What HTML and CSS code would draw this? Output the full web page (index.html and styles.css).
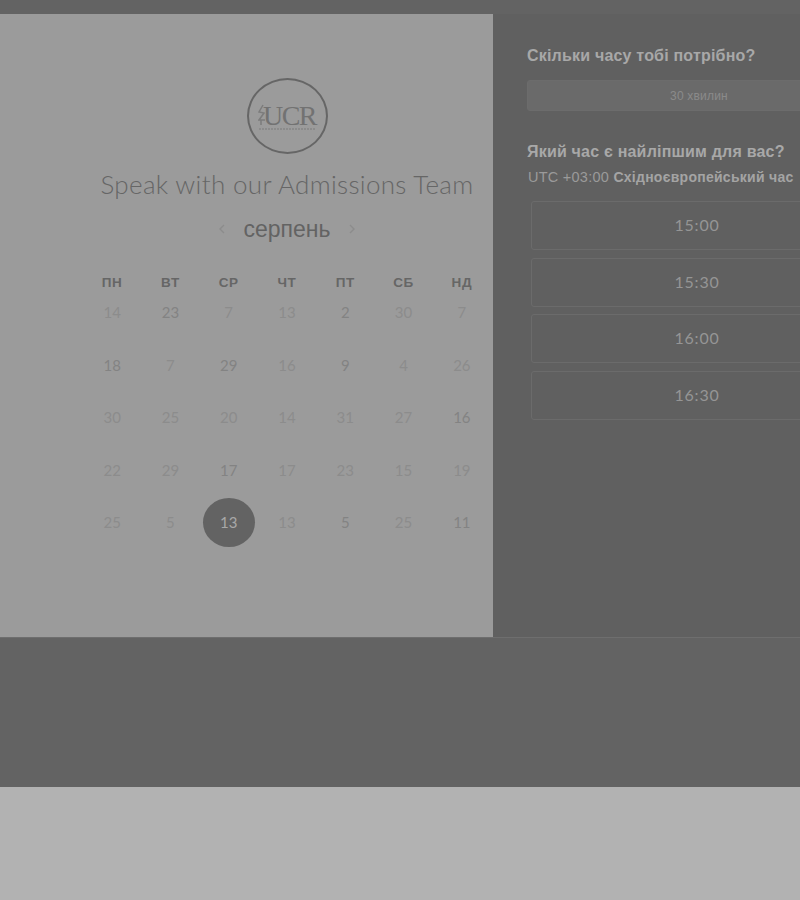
FILE: index.html
```html
<!DOCTYPE html>
<html lang="uk">
<head>
    <meta charset="UTF-8">
    <meta name="viewport" content="width=device-width, initial-scale=1.0">
    <title>Speak with our Admissions Team</title>
    <link rel="stylesheet" href="styles.css">
</head>
<body>

<div class="top-bar"></div>

<main class="booking">
    <section class="calendar-panel">
        <div class="logo">
            <div class="logo-mark">
                <svg width="7" height="22" viewBox="0 0 7 22"><path d="M5 1 1 8l5 1-5 7h6M3 16v5"/></svg>
                <span class="logo-name">UCR</span>
            </div>
            <svg class="logo-rule" width="56" height="2" viewBox="0 0 56 2"><path d="M0 1h56"/></svg>
        </div>
        <h1 class="title">Speak with our Admissions Team</h1>

        <div class="month-nav">
            <svg class="chevron" width="10" height="14" viewBox="0 0 10 14"><path d="M7 3 3 7l4 4"/></svg>
            <span class="month-name">серпень</span>
            <svg class="chevron" width="10" height="14" viewBox="0 0 10 14"><path d="M3 3l4 4-4 4"/></svg>
        </div>

        <div class="weekdays">
            <div class="weekday">ПН</div>
            <div class="weekday">ВТ</div>
            <div class="weekday">СР</div>
            <div class="weekday">ЧТ</div>
            <div class="weekday">ПТ</div>
            <div class="weekday">СБ</div>
            <div class="weekday">НД</div>
        </div>

        <div class="days">
            <div class="day">14</div>
            <div class="day dark">23</div>
            <div class="day">7</div>
            <div class="day">13</div>
            <div class="day dark">2</div>
            <div class="day">30</div>
            <div class="day">7</div>

            <div class="day dark">18</div>
            <div class="day">7</div>
            <div class="day dark">29</div>
            <div class="day">16</div>
            <div class="day dark">9</div>
            <div class="day">4</div>
            <div class="day">26</div>

            <div class="day">30</div>
            <div class="day">25</div>
            <div class="day">20</div>
            <div class="day">14</div>
            <div class="day">31</div>
            <div class="day">27</div>
            <div class="day dark">16</div>

            <div class="day">22</div>
            <div class="day">29</div>
            <div class="day dark">17</div>
            <div class="day">17</div>
            <div class="day">23</div>
            <div class="day">15</div>
            <div class="day">19</div>

            <div class="day">25</div>
            <div class="day">5</div>
            <div class="day"><span class="selected">13</span></div>
            <div class="day">13</div>
            <div class="day dark">5</div>
            <div class="day">25</div>
            <div class="day dark">11</div>
        </div>
    </section>

    <section class="times-panel">
        <h2 class="question">Скільки часу тобі потрібно?</h2>
        <button type="button" class="duration">30 хвилин</button>

        <h2 class="question question-time">Який час є найліпшим для вас?</h2>
        <p class="timezone">UTC +03:00 <b>Східноєвропейський час</b></p>

        <div class="slots">
            <button type="button" class="slot">15:00</button>
            <button type="button" class="slot">15:30</button>
            <button type="button" class="slot">16:00</button>
            <button type="button" class="slot">16:30</button>
        </div>
    </section>
</main>

<div class="footer-band"></div>
<div class="page-bottom"></div>

</body>
</html>
```

FILE: styles.css
```css
html, body {
    margin: 0;
    height: 900px;
    overflow: hidden;
}
body {
    font-family: "Liberation Sans", Arial, sans-serif;
    background-color: #b2b2b2;
}
.top-bar {
    height: 14px;
    background-color: #636363;
}
.booking {
    display: flex;
    width: 871px;
    height: 623px;
    border-bottom: 1px solid #6e6e6e;
}
.calendar-panel {
    width: 493px;
    flex-shrink: 0;
    box-sizing: border-box;
    padding: 64px 2px 0 83px;
    background-color: #9b9b9b;
}
.times-panel {
    flex: 1;
    min-width: 0;
    box-sizing: border-box;
    padding: 32px 0 0 34px;
    background-color: #606060;
}
.logo {
    width: 81px;
    height: 76px;
    margin: 0 auto;
    box-sizing: border-box;
    border: 2.500px solid #666;
    border-radius: 50%;
    display: flex;
    flex-direction: column;
    align-items: center;
    justify-content: center;
    color: #727272;
}
.logo-mark {
    display: flex;
    align-items: center;
    gap: 0;
}
.logo-mark svg {
    margin-right: -2px;
    fill: none;
    stroke: #7c7c7c;
    stroke-width: 1.5;
}
.logo-name {
    font-family: "Liberation Serif", serif;
    font-size: 28px;
    line-height: 25px;
    letter-spacing: -1.5px;
}
.logo-rule {
    fill: none;
    stroke: #868686;
    stroke-width: 1.5;
    stroke-dasharray: 2 1;
}
.title {
    margin: 15px 0 0;
    font-family: Lato, sans-serif;
    font-size: 26px;
    font-weight: 300;
    line-height: 30px;
    letter-spacing: 0.33px;
    text-align: center;
    color: #666;
    white-space: nowrap;
}
.month-nav {
    display: flex;
    justify-content: center;
    align-items: center;
    gap: 16px;
    height: 30px;
    margin-top: 15px;
}
.month-name {
    font-size: 23px;
    color: #636363;
}
.chevron {
    fill: none;
    stroke: #8c8c8c;
    stroke-width: 1.4;
}
.weekdays {
    display: grid;
    grid-template-columns: repeat(7, 1fr);
    margin-top: 28px;
    text-align: center;
}
.weekday {
    line-height: 21px;
    font-size: 13.500px;
    font-weight: bold;
    letter-spacing: 0.6px;
    color: #666;
}
.days {
    display: grid;
    grid-template-columns: repeat(7, 1fr);
    grid-auto-rows: 38px;
    row-gap: 14.500px;
}
.day {
    font-family: Lato, sans-serif;
    font-size: 15px;
    color: #8c8c8c;
    display: flex;
    align-items: center;
    justify-content: center;
}
.day.dark {
    color: #838383;
}
.selected {
    flex-shrink: 0;
    width: 52px;
    height: 49px;
    border-radius: 50%;
    background-color: #636363;
    color: #a8a8a8;
    line-height: 49px;
    text-align: center;
}
.question {
    margin: 0;
    font-size: 16px;
    font-weight: bold;
    line-height: 19px;
    letter-spacing: 0.2px;
    color: #a8a8a8;
}
.duration {
    display: block;
    width: 344px;
    height: 31px;
    margin-top: 15px;
    padding: 0;
    border: 1px solid #6c6c6c;
    border-radius: 3px;
    background-color: #6a6a6a;
    font-family: "Liberation Sans", Arial, sans-serif;
    font-size: 12px;
    letter-spacing: 0.2px;
    color: #8a8a8a;
}
.question-time {
    margin-top: 31px;
}
.timezone {
    margin: 8px 0 0 1px;
    font-size: 14.500px;
    line-height: 17px;
    letter-spacing: 0.25px;
    color: #9a9a9a;
    white-space: nowrap;
}
.timezone b {
    font-size: 14px;
    letter-spacing: 0.27px;
    color: #a4a4a4;
}
.slots {
    display: flex;
    flex-direction: column;
    gap: 7.500px;
    margin: 15px 0 0 4px;
}
.slot {
    width: 332px;
    height: 49px;
    padding: 0 0 2px;
    border: 1px solid #6b6b6b;
    border-radius: 3px;
    background-color: transparent;
    font-family: Lato, sans-serif;
    font-size: 16px;
    letter-spacing: 0.8px;
    color: #959595;
}
.footer-band {
    height: 149px;
    background-color: #636363;
}
.page-bottom {
    height: 113px;
    background-color: #b2b2b2;
}
```
